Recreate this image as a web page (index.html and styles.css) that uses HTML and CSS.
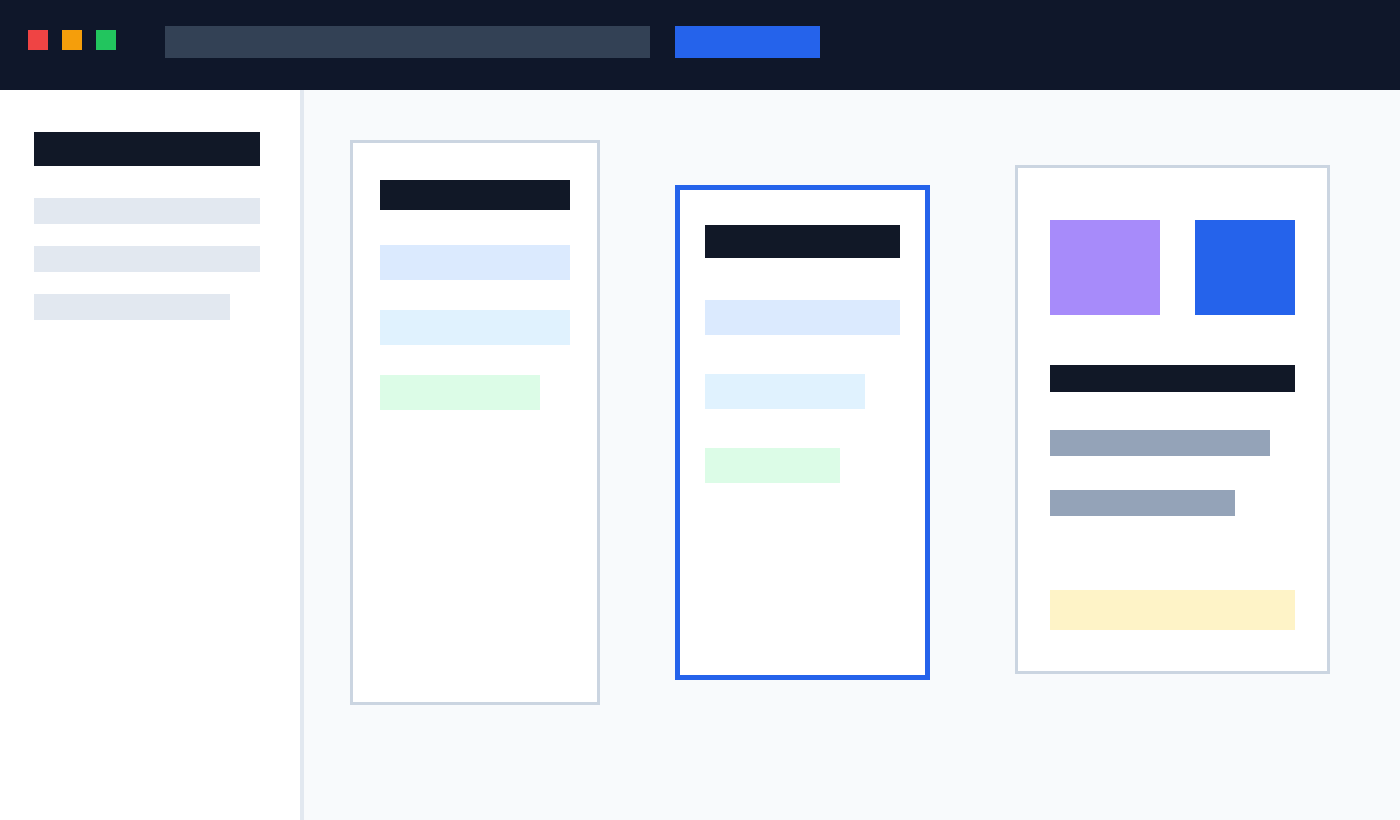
FILE: index.html
```html
<!DOCTYPE html>
<html lang="en">
<head>
<meta charset="utf-8">
<title>Board</title>
<link rel="stylesheet" href="styles.css">
</head>
<body>
<header class="topbar">
  <div class="dots">
    <span class="dot dot-red"></span>
    <span class="dot dot-amber"></span>
    <span class="dot dot-green"></span>
  </div>
  <div class="search"></div>
  <div class="action"></div>
</header>
<div class="layout">
  <aside class="sidebar">
    <div class="side-title"></div>
    <div class="side-item"></div>
    <div class="side-item"></div>
    <div class="side-item side-item-short"></div>
  </aside>
  <main class="canvas">
    <section class="card card-one">
      <div class="c1-title"></div>
      <div class="c1-row c1-blue"></div>
      <div class="c1-row c1-sky"></div>
      <div class="c1-row c1-green"></div>
    </section>
    <section class="card card-two">
      <div class="c2-title"></div>
      <div class="c2-row c2-blue"></div>
      <div class="c2-row c2-sky"></div>
      <div class="c2-row c2-green"></div>
    </section>
    <section class="card card-three">
      <div class="c3-tiles">
        <div class="tile tile-purple"></div>
        <div class="tile tile-blue"></div>
      </div>
      <div class="c3-title"></div>
      <div class="c3-line c3-line-a"></div>
      <div class="c3-line c3-line-b"></div>
      <div class="c3-note"></div>
    </section>
  </main>
</div>
</body>
</html>
```
FILE: styles.css
```css
* { box-sizing: border-box; }
html, body { margin: 0; padding: 0; }
body {
  width: 1400px;
  height: 820px;
  overflow: hidden;
  font-family: "Liberation Sans", Arial, sans-serif;
  background: #f8fafc;
}

.topbar {
  height: 90px;
  background: #0f172a;
  display: flex;
  align-items: flex-start;
  padding: 26px 0 0 28px;
}
.dots {
  display: flex;
  gap: 14px;
  margin-top: 4px;
}
.dot { width: 20px; height: 20px; display: block; }
.dot-red { background: #ef4444; }
.dot-amber { background: #f59e0b; }
.dot-green { background: #22c55e; }
.search {
  width: 485px;
  height: 32px;
  background: #334155;
  margin-left: 49px;
}
.action {
  width: 145px;
  height: 32px;
  background: #2563eb;
  margin-left: 25px;
}

.layout {
  display: flex;
  height: 730px;
}
.sidebar {
  width: 304px;
  flex: none;
  background: #ffffff;
  border-right: 4px solid #e2e8f0;
  padding: 42px 0 0 34px;
  display: flex;
  flex-direction: column;
}
.side-title { width: 226px; height: 34px; background: #111827; margin-bottom: 32px; }
.side-item { width: 226px; height: 26px; background: #e2e8f0; margin-bottom: 22px; }
.side-item-short { width: 196px; }

.canvas {
  flex: 1;
  display: flex;
  align-items: flex-start;
  padding: 50px 0 0 46px;
}
.card {
  background: #ffffff;
  display: flex;
  flex-direction: column;
  align-items: flex-start;
  flex: none;
}

.card-one {
  width: 250px;
  height: 565px;
  border: 3px solid #cbd5e1;
  padding: 37px 0 0 27px;
}
.c1-title { width: 190px; height: 30px; background: #111827; margin-bottom: 35px; }
.c1-row { height: 35px; margin-bottom: 30px; }
.c1-blue { width: 190px; background: #dbeafe; }
.c1-sky { width: 190px; background: #e0f2fe; }
.c1-green { width: 160px; background: #dcfce7; }

.card-two {
  width: 255px;
  height: 495px;
  margin: 45px 0 0 75px;
  border: 5px solid #2563eb;
  padding: 35px 0 0 25px;
}
.c2-title { width: 195px; height: 33px; background: #111827; margin-bottom: 42px; }
.c2-row { height: 35px; margin-bottom: 39px; }
.c2-blue { width: 195px; background: #dbeafe; }
.c2-sky { width: 160px; background: #e0f2fe; }
.c2-green { width: 135px; background: #dcfce7; }

.card-three {
  width: 315px;
  height: 509px;
  margin: 25px 0 0 85px;
  border: 3px solid #cbd5e1;
  padding: 52px 0 0 32px;
}
.c3-tiles { display: flex; gap: 35px; margin-bottom: 50px; }
.tile { height: 95px; }
.tile-purple { width: 110px; background: #a78bfa; }
.tile-blue { width: 100px; background: #2563eb; }
.c3-title { width: 245px; height: 27px; background: #111827; margin-bottom: 38px; }
.c3-line { height: 26px; background: #94a3b8; }
.c3-line-a { width: 220px; margin-bottom: 34px; }
.c3-line-b { width: 185px; margin-bottom: 74px; }
.c3-note { width: 245px; height: 40px; background: #fef3c7; }
```
